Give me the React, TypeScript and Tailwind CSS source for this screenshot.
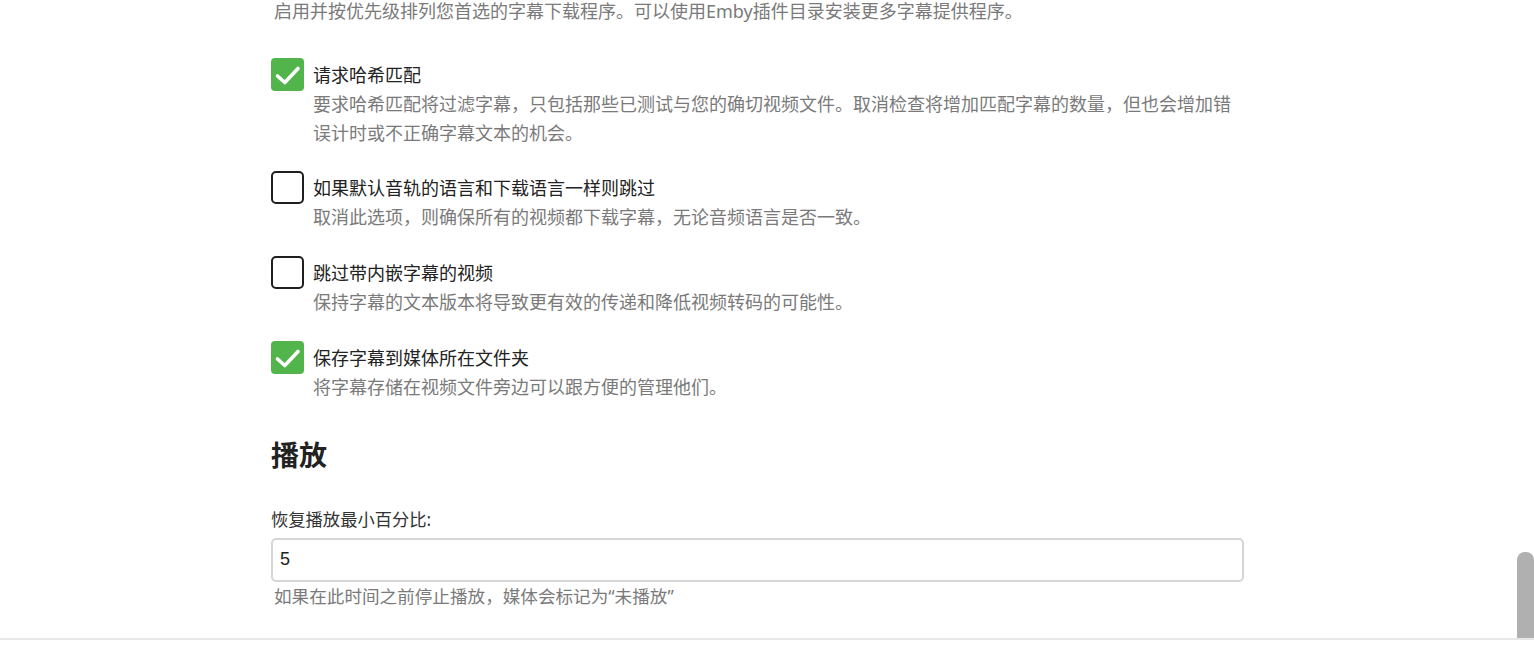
import React from "react";

const options = [
  {
    label: "请求哈希匹配",
    desc: "要求哈希匹配将过滤字幕，只包括那些已测试与您的确切视频文件。取消检查将增加匹配字幕的数量，但也会增加错误计时或不正确字幕文本的机会。",
    checked: true,
  },
  {
    label: "如果默认音轨的语言和下载语言一样则跳过",
    desc: "取消此选项，则确保所有的视频都下载字幕，无论音频语言是否一致。",
    checked: false,
  },
  {
    label: "跳过带内嵌字幕的视频",
    desc: "保持字幕的文本版本将导致更有效的传递和降低视频转码的可能性。",
    checked: false,
  },
  {
    label: "保存字幕到媒体所在文件夹",
    desc: "将字幕存储在视频文件旁边可以跟方便的管理他们。",
    checked: true,
  },
];

function Checkbox({ checked }: { checked: boolean }) {
  if (checked) {
    return (
      <div className="w-[33px] h-[33px] shrink-0 rounded-[4px] bg-[#52b54b] flex items-center justify-center">
        <svg width="33" height="33" viewBox="0 0 33 33">
          <path d="M6.5 18 L13.8 24.5 L27 10.5" fill="none" stroke="#fff" strokeWidth="3.6" strokeLinecap="round" strokeLinejoin="round" />
        </svg>
      </div>
    );
  }
  return <div className="w-[33px] h-[33px] shrink-0 rounded-[5px] border-2 border-[#1f1f1f] bg-white" />;
}

export default function App() {
  return (
    <div className="h-[659px] w-full bg-white overflow-hidden flex flex-col font-['Noto_Sans','Noto_Sans_CJK_SC',sans-serif]">
      <div className="relative h-[640px] shrink-0 border-b-2 border-[#e8e8e8] overflow-hidden">
        <div className="ml-[271px] w-[973px]">
          <p className="-mt-[3px] pl-[3px] text-[18px] leading-[28.8px] text-[#7a7a7a]">
            启用并按优先级排列您首选的字幕下载程序。可以使用Emby插件目录安装更多字幕提供程序。
          </p>

          <div className="mt-[32px] flex flex-col gap-6">
            {options.map((item, index) => (
              <div key={index} className="flex gap-[9px]">
                <Checkbox checked={item.checked} />
                <div className="flex-1">
                  <div className="mt-[2px] text-[18px] leading-[30px] text-[#222]">{item.label}</div>
                  <div className="text-[18px] leading-[28.8px] text-[#7a7a7a]">{item.desc}</div>
                </div>
              </div>
            ))}
          </div>

          <h2 className="mt-[36px] text-[28px] leading-[35px] font-bold text-[#222]">播放</h2>

          <div className="mt-[33px]">
            <label className="block text-[17.3px] leading-[28px] text-[#333]">恢复播放最小百分比:</label>
            <div className="mt-[4px] h-[44px] rounded-[5px] border-2 border-[#d6d6d6] flex items-center px-[7px] text-[18px] text-[#222] font-['Liberation_Sans','Noto_Sans_CJK_SC',sans-serif]">
              5
            </div>
            <p className="pl-[3px] text-[17.6px] leading-[28px] text-[#7a7a7a]">
              如果在此时间之前停止播放，媒体会标记为“未播放”
            </p>
          </div>
        </div>

        <div className="absolute right-0 bottom-0 w-[17px] h-[86px] rounded-t-[8px] bg-[#b0b0b0]" />
      </div>
      <div className="flex-1 bg-white" />
    </div>
  );
}
